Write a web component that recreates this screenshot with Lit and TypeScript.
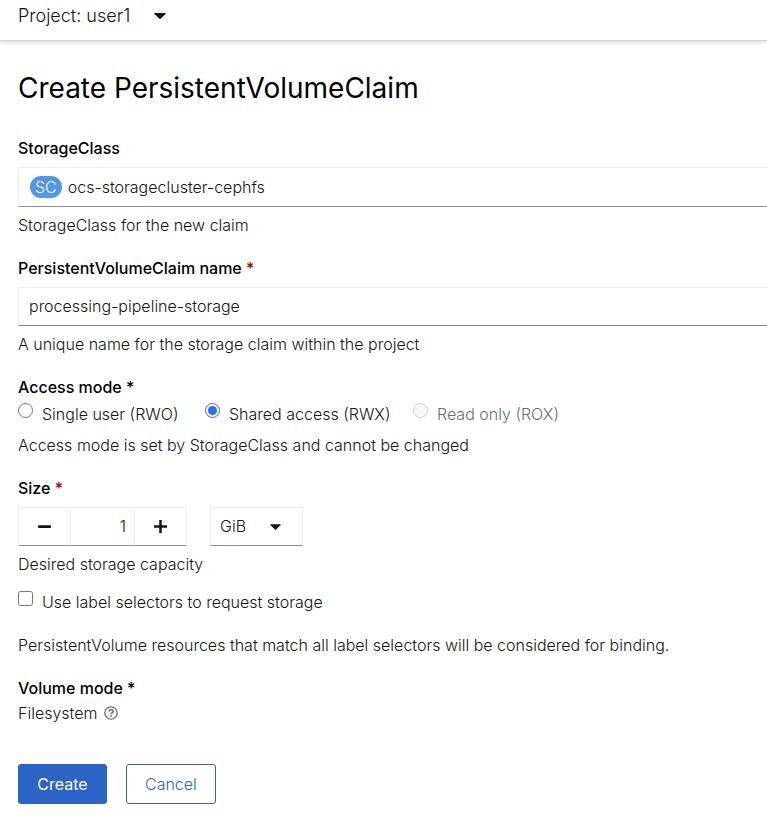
import { LitElement, html, css } from "lit";
import { customElement, state } from "lit/decorators.js";

const caret = html`<svg class="caret" viewBox="0 0 12 6" aria-hidden="true"><path d="M0.6 0h10.8q.7.2.2.9L6.7 5.7q-.7.5-1.4 0L.4.9Q-.1.2.6 0z" fill="currentColor" /></svg>`;

@customElement("app-root")
export class AppRoot extends LitElement {
  @state() private size = 1;

  static styles = css`
    :host {
      display: block;
      background: #fff;
      color: #151515;
      font-family: Inter, "Liberation Sans", sans-serif;
      font-size: 16px;
      font-weight: 300;
      line-height: 24px;
    }
    * { box-sizing: border-box; }
    button, input, select {
      font: inherit;
      color: inherit;
      margin: 0;
      border-radius: 0;
    }
    button { cursor: pointer; }
    .bar {
      height: 41px;
      padding: 4px 18px 0;
      border-bottom: 1px solid #d2d2d2;
      box-shadow: 0 2px 4px rgba(3, 3, 3, 0.12);
    }
    .project {
      display: flex;
      align-items: center;
      gap: 24px;
      padding: 0;
      border: 0;
      background: none;
      font-size: 18px;
    }
    .caret { width: 12px; height: 6px; display: block; }
    form { padding: 31px 0 14px 18px; }
    h1 {
      margin: 0 0 32px;
      font-size: 28px;
      font-weight: 400;
      line-height: 32px;
      color: #000;
    }
    .group { margin-bottom: 19px; }
    .label {
      display: block;
      margin: 0 0 7px;
      padding: 0;
      font-weight: 500;
      color: #000;
    }
    .tight { margin-bottom: 3px; }
    .flush { margin-bottom: 1px; }
    .req { color: #a30000; }
    .help { margin: 6px 0 0; }
    .field {
      display: flex;
      align-items: center;
      width: 100%;
      height: 39px;
      padding: 0 10px 2px;
      border: 1px solid #ededed;
      border-right: 0;
      border-bottom-color: #8a8d90;
      background: #fff;
      text-align: left;
    }
    .dropdown { height: 40px; gap: 6px; padding: 0 11px; }
    .badge {
      padding: 0 5px;
      border-radius: 11px;
      background: #4f97ea;
      color: #fff;
      line-height: 22px;
    }
    fieldset { border: 0; margin: 0 0 19px; padding: 0; min-width: 0; }
    .radios { display: grid; grid-template-columns: 187px 208px auto; margin-bottom: 7px; }
    .choice { display: flex; gap: 9px; }
    .choice input { width: 15px; height: 15px; flex: none; margin-top: 1px; accent-color: #2b6cf5; }
    .choice.off { color: #6a6e73; }
    .sizes { display: flex; gap: 23px; }
    .stepper { display: grid; grid-template-columns: 52px 64px 52px; height: 39px; border-left: 1px solid #ededed; }
    .stepper > * {
      min-width: 0;
      border: 1px solid #ededed;
      border-left: 0;
      border-bottom-color: #8a8d90;
      background: #fff;
      padding: 0 8px;
    }
    .stepper input { text-align: right; padding-bottom: 2px; }
    .stepper svg { display: block; margin: auto; width: 13px; height: 13px; }
    .unit { position: relative; display: flex; align-items: center; }
    .unit select {
      appearance: none;
      width: 93px;
      height: 39px;
      padding: 0 9px 2px;
      border: 1px solid #ededed;
      border-bottom-color: #8a8d90;
      background: #fff;
    }
    .unit .caret { position: absolute; right: 22px; width: 11px; pointer-events: none; }
    .check { margin: 14px 0 19px; }
    .note { margin: 0 0 19px; }
    .mode { display: flex; align-items: center; gap: 7px; }
    .tip { padding: 0; border: 0; background: none; color: #6a6e73; }
    .tip svg { display: block; width: 14px; height: 14px; }
    .actions { display: flex; gap: 19px; margin-top: 39px; }
    .btn {
      height: 40px;
      min-width: 89px;
      padding: 0 18px;
      border: 1px solid #2b63c6;
      border-radius: 3px;
      background: #fff;
      color: #2b63c6;
    }
    .primary { background: #2b63c6; color: #fff; font-weight: 400; }
  `;

  render() {
    return html`
      <header class="bar"><button class="project" type="button">Project: user1 ${caret}</button></header>
      <form @submit=${(e: Event) => e.preventDefault()}>
        <h1>Create PersistentVolumeClaim</h1>
        <div class="group">
          <label class="label" for="sc">StorageClass</label>
          <button class="field dropdown" id="sc" type="button"><span class="badge">SC</span>ocs-storagecluster-cephfs</button>
          <p class="help">StorageClass for the new claim</p>
        </div>
        <div class="group">
          <label class="label" for="name">PersistentVolumeClaim name <span class="req">*</span></label>
          <input class="field" id="name" type="text" value="processing-pipeline-storage" />
          <p class="help">A unique name for the storage claim within the project</p>
        </div>
        <fieldset>
          <legend class="label tight">Access mode *</legend>
          <div class="radios">
            <label class="choice"><input type="radio" name="mode" />Single user (RWO)</label>
            <label class="choice"><input type="radio" name="mode" checked />Shared access (RWX)</label>
            <label class="choice off"><input type="radio" name="mode" disabled />Read only (ROX)</label>
          </div>
          <p class="help">Access mode is set by StorageClass and cannot be changed</p>
        </fieldset>
        <label class="label" for="size">Size <span class="req">*</span></label>
        <div class="sizes">
          <div class="stepper">
            <button type="button" aria-label="Decrease" @click=${() => (this.size = Math.max(1, this.size - 1))}>
              <svg viewBox="0 0 13 13"><rect x="0" y="5.3" width="13" height="2.6" rx="0.8" fill="currentColor" /></svg>
            </button>
            <input id="size" type="text" inputmode="numeric" .value=${String(this.size)} />
            <button type="button" aria-label="Increase" @click=${() => (this.size += 1)}>
              <svg viewBox="0 0 13 13"><path d="M0 6.500h13M6.500 0v13" stroke="currentColor" stroke-width="2.5" /></svg>
            </button>
          </div>
          <div class="unit">
            <select aria-label="Unit"><option>MiB</option><option selected>GiB</option><option>TiB</option></select>
            ${caret}
          </div>
        </div>
        <p class="help">Desired storage capacity</p>
        <label class="choice check"><input type="checkbox" />Use label selectors to request storage</label>
        <p class="note">PersistentVolume resources that match all label selectors will be considered for binding.</p>
        <span class="label flush">Volume mode *</span>
        <div class="mode">Filesystem
          <button class="tip" type="button" aria-label="Help">
            <svg viewBox="0 0 14 14" fill="none" stroke="currentColor"><circle cx="7" cy="7" r="6.2" stroke-width="1.3" /><path d="M4.9 5.5C5.1 4.2 6 3.8 7 3.8c1.2 0 2.1.7 2.1 1.7 0 1.3-2 1.3-2 2.7" stroke-width="1.5" /><circle cx="7" cy="10" r="0.9" fill="currentColor" stroke="none" /></svg>
          </button>
        </div>
        <div class="actions">
          <button class="btn primary" type="submit">Create</button>
          <button class="btn" type="button">Cancel</button>
        </div>
      </form>
    `;
  }
}
